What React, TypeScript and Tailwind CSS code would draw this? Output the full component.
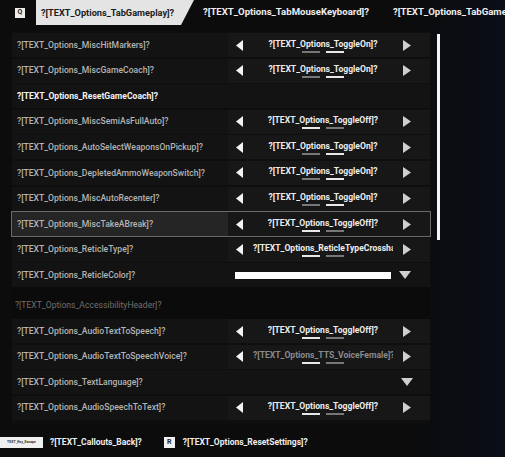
import React from "react";

type Val =
  | { kind: "toggle"; text: string; active: 0 | 1; dim?: boolean; clip?: boolean }
  | { kind: "color" }
  | { kind: "drop" }
  | { kind: "none" };

type Row = { label: string; val: Val; bold?: boolean; hl?: boolean };

const rowsA: Row[] = [
  { label: "?[TEXT_Options_MiscHitMarkers]?", val: { kind: "toggle", text: "?[TEXT_Options_ToggleOn]?", active: 1 } },
  { label: "?[TEXT_Options_MiscGameCoach]?", val: { kind: "toggle", text: "?[TEXT_Options_ToggleOn]?", active: 1 } },
  { label: "?[TEXT_Options_ResetGameCoach]?", val: { kind: "none" }, bold: true },
  { label: "?[TEXT_Options_MiscSemiAsFullAuto]?", val: { kind: "toggle", text: "?[TEXT_Options_ToggleOff]?", active: 0 } },
  { label: "?[TEXT_Options_AutoSelectWeaponsOnPickup]?", val: { kind: "toggle", text: "?[TEXT_Options_ToggleOn]?", active: 1 } },
  { label: "?[TEXT_Options_DepletedAmmoWeaponSwitch]?", val: { kind: "toggle", text: "?[TEXT_Options_ToggleOn]?", active: 1 } },
  { label: "?[TEXT_Options_MiscAutoRecenter]?", val: { kind: "toggle", text: "?[TEXT_Options_ToggleOn]?", active: 1 } },
  { label: "?[TEXT_Options_MiscTakeABreak]?", val: { kind: "toggle", text: "?[TEXT_Options_ToggleOff]?", active: 0 }, hl: true },
  { label: "?[TEXT_Options_ReticleType]?", val: { kind: "toggle", text: "?[TEXT_Options_ReticleTypeCrosshair]?", active: 0, clip: true } },
  { label: "?[TEXT_Options_ReticleColor]?", val: { kind: "color" } },
];

const rowsB: Row[] = [
  { label: "?[TEXT_Options_AudioTextToSpeech]?", val: { kind: "toggle", text: "?[TEXT_Options_ToggleOff]?", active: 0 } },
  { label: "?[TEXT_Options_AudioTextToSpeechVoice]?", val: { kind: "toggle", text: "?[TEXT_Options_TTS_VoiceFemale]?", active: 0, dim: true, clip: true } },
  { label: "?[TEXT_Options_TextLanguage]?", val: { kind: "drop" } },
  { label: "?[TEXT_Options_AudioSpeechToText]?", val: { kind: "toggle", text: "?[TEXT_Options_ToggleOff]?", active: 0 } },
];

function LeftArrow() {
  return (
    <svg width="7" height="11" viewBox="0 0 7 11" className="shrink-0">
      <polygon points="7,0 7,11 0,5.5" fill="#f2f2f2" />
    </svg>
  );
}
function RightArrow() {
  return (
    <svg width="8" height="11" viewBox="0 0 8 11" className="shrink-0">
      <polygon points="0,0 0,11 8,5.5" fill="#cfcfcf" />
    </svg>
  );
}
function DownArrow() {
  return (
    <svg width="12" height="8" viewBox="0 0 12 8" className="shrink-0">
      <polygon points="0,0 12,0 6,8" fill="#cfcfcf" />
    </svg>
  );
}

function Value({ v }: { v: Val }) {
  if (v.kind === "none") return <div className="w-[202px]" />;
  if (v.kind === "color")
    return (
      <div className="w-[202px] h-full flex items-center pl-[7px] pr-[19px] gap-[8px]">
        <div className="h-[7px] w-[158px] bg-white" />
        <DownArrow />
      </div>
    );
  if (v.kind === "drop")
    return (
      <div className="w-[202px] h-full flex items-center justify-end pr-[17px]">
        <DownArrow />
      </div>
    );
  return (
    <div className="w-[202px] h-full flex items-center pl-[8px] pr-[19px] bg-[#171717]">
      <LeftArrow />
      <div className="flex-1 min-w-0 flex flex-col items-center pt-[1px]">
        <div
          className={`w-[140px] whitespace-nowrap overflow-hidden text-[8.6px] leading-[10px] font-bold ${
            v.clip ? "text-left" : "text-center"
          } ${v.dim ? "text-[#8a8a8a]" : "text-[#ececec]"}`}
        >
          {v.text}
        </div>
        <div className="flex gap-[6px] mt-[2px]">
          <div className={`h-[2px] w-[18px] ${v.active === 0 ? "bg-[#e8e8e8]" : "bg-[#777]"}`} />
          <div className={`h-[2px] w-[18px] ${v.active === 1 ? "bg-[#e8e8e8]" : "bg-[#777]"}`} />
        </div>
      </div>
      <RightArrow />
    </div>
  );
}

function OptionRow({ r }: { r: Row }) {
  return (
    <div
      className={`h-[24px] flex items-center ${
        r.hl ? "bg-[#252525] outline outline-1 outline-[#6a6a6a]" : "bg-[#131313]"
      }`}
    >
      <div
        className={`flex-1 pl-[5px] text-[8.6px] whitespace-nowrap ${
          r.bold ? "text-[#f2f2f2] font-bold" : "text-[#b4b4b4] font-medium"
        }`}
      >
        {r.label}
      </div>
      <Value v={r.val} />
    </div>
  );
}

export default function App() {
  return (
    <div className="w-[505px] h-[457px] overflow-hidden bg-[linear-gradient(90deg,#0c0c0c_0%,#0c0c0d_80%,#0a0e17_100%)] font-['Roboto',sans-serif] flex flex-col">
      {/* Tabs */}
      <div className="h-[25px] flex items-center shrink-0 overflow-hidden">
        <div className="shrink-0 ml-[15px] w-[10px] h-[10px] bg-[#ededed] flex items-center justify-center text-[7px] font-bold text-[#222] leading-none">
          Q
        </div>
        <div className="shrink-0 ml-[11px] h-[25px] w-[158px] bg-[#e4e4e4] [clip-path:polygon(0_0,100%_0,calc(100%-13px)_100%,0_100%)] flex items-center pl-[5px]">
          <span className="text-[9.2px] font-bold text-[#1c1c1c] whitespace-nowrap">?[TEXT_Options_TabGameplay]?</span>
        </div>
        <span className="shrink-0 ml-[9px] text-[9.6px] font-bold text-[#eeeeee] whitespace-nowrap">
          ?[TEXT_Options_TabMouseKeyboard]?
        </span>
        <span className="shrink-0 ml-[24px] text-[9.6px] font-bold text-[#eeeeee] whitespace-nowrap">
          ?[TEXT_Options_TabGamepad]?
        </span>
      </div>

      {/* Body */}
      <div className="flex mt-[6px]">
        <div className="ml-[12px] w-[418px] bg-[#0e0e0e] pt-[2px] pb-[4px]">
          <div className="flex flex-col gap-[1.6px]">
            {rowsA.map((r) => (
              <OptionRow key={r.label} r={r} />
            ))}
          </div>
          <div className="h-[32px] flex items-center pl-[3px] pt-[4px] bg-[#0b0b0b]">
            <span className="text-[8.6px] text-[#6f6f6f]">?[TEXT_Options_AccessibilityHeader]?</span>
          </div>
          <div className="flex flex-col gap-[1.4px]">
            {rowsB.map((r) => (
              <OptionRow key={r.label} r={r} />
            ))}
          </div>
        </div>
        <div className="ml-[7px] mt-[3px] w-[3px] h-[206px] bg-[#f4f4f4]" />
      </div>

      {/* Footer */}
      <div className="mt-[13px] flex items-center h-[12px]">
        <div className="w-[43px] h-[11px] bg-[#f0f0f0] flex items-center justify-center">
          <span className="text-[3.5px] text-[#333] font-bold whitespace-nowrap">TEXT_Key_Escape</span>
        </div>
        <span className="ml-[7px] text-[8.5px] font-bold text-[#eeeeee] whitespace-nowrap">?[TEXT_Callouts_Back]?</span>
        <div className="ml-[22px] w-[11px] h-[11px] bg-[#f0f0f0] flex items-center justify-center text-[7px] font-bold text-[#222] leading-none">
          R
        </div>
        <span className="ml-[8px] text-[8.5px] font-bold text-[#eeeeee] whitespace-nowrap">?[TEXT_Options_ResetSettings]?</span>
      </div>
    </div>
  );
}
